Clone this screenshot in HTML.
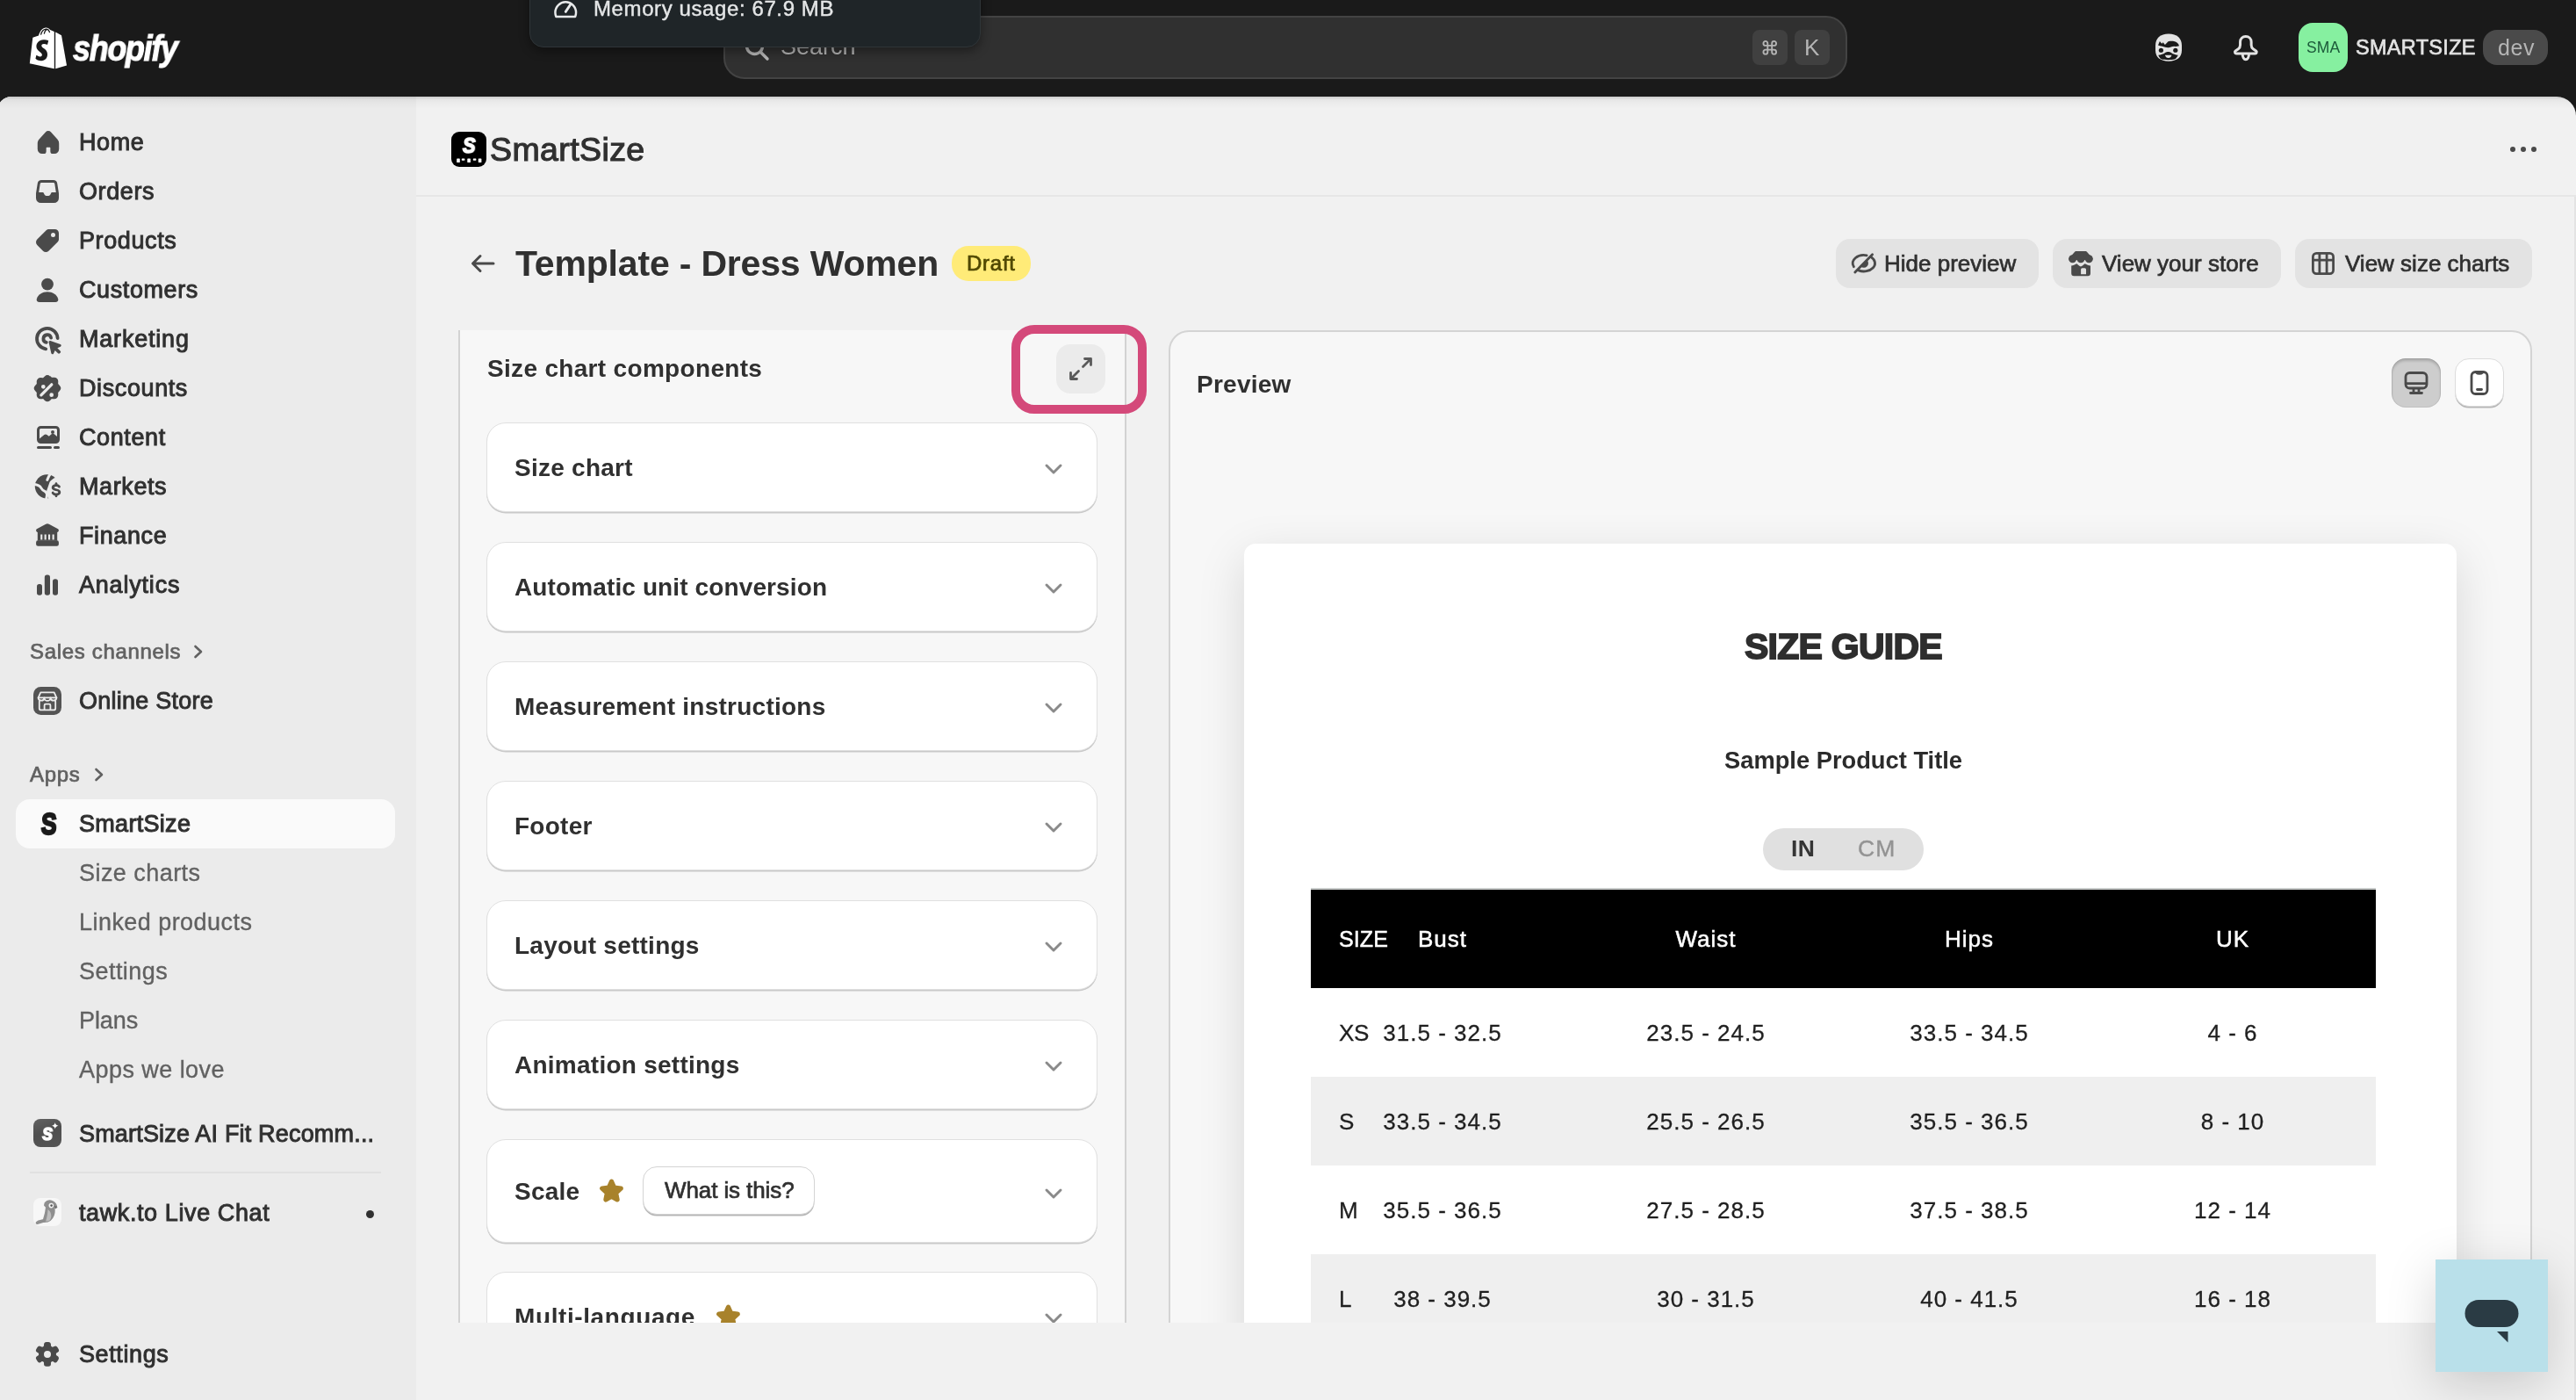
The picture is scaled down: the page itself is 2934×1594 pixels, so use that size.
<!DOCTYPE html>
<html>
<head>
<meta charset="utf-8">
<title>SmartSize</title>
<style>
*{box-sizing:border-box;margin:0;padding:0}
html,body{width:2934px;height:1594px;overflow:hidden;background:#1a1a1a}
body{position:relative;font-family:"Liberation Sans",sans-serif;color:#303030}
.a{position:absolute}
.x{position:absolute;white-space:nowrap;line-height:1;will-change:transform}
.m{-webkit-text-stroke:.7px currentColor}
.b{font-weight:bold}
svg{position:absolute;overflow:visible}
/* top bar */
#search{left:824px;top:18px;width:1280px;height:72px;border-radius:24px;background:#303030;border:2px solid #434343}
.kbd{top:34px;width:40px;height:40px;border-radius:8px;background:#404040;color:#b5b5b5;text-align:center}
#mem{left:603px;top:-20px;width:514px;height:73.500px;border-radius:16px;background:#1f2528;border:1px solid #2f3538;box-shadow:0 4px 12px rgba(0,0,0,.4)}
/* frame */
#frame{left:-3px;top:110px;width:2937px;height:1500px;background:#f1f1f1;border-radius:16px 22px 0 0;overflow:hidden}
#side{left:0;top:0;width:477px;height:1500px;background:#ebebeb}
#topshade{left:0;top:0;width:2937px;height:14px;background:linear-gradient(rgba(0,0,0,.14) 0,rgba(0,0,0,.12) 1.500px,rgba(0,0,0,.05) 3px,rgba(0,0,0,.025) 7px,rgba(0,0,0,0) 14px)}
.nav{left:90px;font-size:27px;letter-spacing:.6px;color:#303030}
.nav.m{-webkit-text-stroke:.95px currentColor}
.sub{left:90px;font-size:27px;letter-spacing:.45px;color:#616161;-webkit-text-stroke:.35px #616161}
.sec{left:34px;font-size:24px;letter-spacing:.68px;color:#616161}
.ic{left:34px;width:40px;height:40px;fill:#4a4a4a}
/* page */
.btn{top:272px;height:56px;border-radius:16px;background:#e3e3e3}
.btn .x{font-size:26px;letter-spacing:0;top:15px;color:#303030}
.card{left:554px;width:696px;height:102px;border-radius:22px;background:#fff;border:1.5px solid #e0e0e0;box-shadow:0 2px 0 -.5px #c9c9c9,0 1px 0 0 #d4d4d4}
.card .x{left:31px;top:36px;font-size:28px;font-weight:bold;letter-spacing:.25px}
.c{width:300px;text-align:center}
.chev{left:634px;top:40px;width:22px;height:22px;fill:none;stroke:#8a8a8a;stroke-width:3;stroke-linecap:round;stroke-linejoin:round}
</style>
</head>
<body>

<!-- ================= TOP BAR ================= -->
<div class="a" id="search"></div>
<svg class="a" style="left:846px;top:39px;width:32px;height:32px" viewBox="0 0 32 32" fill="none" stroke="#b5b5b5" stroke-width="3.4" stroke-linecap="round"><circle cx="13.5" cy="13.5" r="9"/><path d="M20.5 20.5L28 28"/></svg>
<div class="x" style="left:888.500px;top:40px;font-size:27px;letter-spacing:0;color:#b5b5b5">Search</div>
<div class="a kbd" style="left:1996px"><svg class="a" style="left:10.300px;top:9.500px;width:19.500px;height:20.500px" viewBox="0 0 24 24" fill="none" stroke="#b5b5b5" stroke-width="2.300" stroke-linejoin="round"><path d="M18 3a3 3 0 0 0-3 3v12a3 3 0 0 0 3 3 3 3 0 0 0 3-3 3 3 0 0 0-3-3H6a3 3 0 0 0-3 3 3 3 0 0 0 3 3 3 3 0 0 0 3-3V6a3 3 0 0 0-3-3 3 3 0 0 0-3 3 3 3 0 0 0 3 3h12a3 3 0 0 0 3-3 3 3 0 0 0-3-3z"/></svg></div>
<div class="a kbd" style="left:2044px"><div class="x" style="left:11px;top:7px;font-size:26px">K</div></div>

<!-- memory tooltip -->
<div class="a" id="mem"></div>
<svg class="a" style="left:631px;top:-6.500px;width:26.500px;height:26.500px" viewBox="0 0 28 28" fill="none" stroke="#e8eaeb" stroke-width="2.6" stroke-linecap="round" stroke-linejoin="round"><path d="M2.5 26.5h23c.7-1.8 1-3.4 1-5.2C26.500 14.300 20.900 8.800 14 8.800S1.500 14.300 1.500 21.300c0 1.800.3 3.400 1 5.200Z"/><path d="M14 20.500L20 11.500" stroke-width="3"/></svg>
<div class="x" style="left:676px;top:-2px;font-size:24px;letter-spacing:.6px;color:#e4e6e7;-webkit-text-stroke:.4px #e4e6e7">Memory usage: 67.9 MB</div>

<!-- logo -->
<svg class="a" style="left:33px;top:29.500px;width:45px;height:49.500px" viewBox="0 0 45 52" preserveAspectRatio="none">
<path fill="#fff" d="M4.300 13.300L11 11.100C12.100 6.300 14.800 2.200 18.800 1.500c2.200-.3 4 .7 5.300 2.600l4.700 2.100V50.800L.8 44.300Z"/>
<path fill="#fff" d="M30.200 6.800l6.800 4L43 46.800 30.200 50.800Z"/>
<path fill="none" stroke="#1a1a1a" stroke-width="1.300" d="M13.500 10.200C14.300 6.600 16.600 3.600 19.300 3.300c2.100-.2 3.600 1.600 4.300 4.200M17.300 9C17.800 6.300 19.200 4 21 3.600"/>
<path fill="#1a1a1a" transform="translate(15.100 16.100) scale(1.130 1.190) translate(-15.500 -15.300)" d="M21.800 16.200c-1.500-.7-3.300-1-5-.9-4.500.3-7.400 3.300-7.200 7 .3 4.400 5.600 5.300 5.700 8 .1 1-.6 1.800-1.700 1.900-1.800.1-4-1.500-4-1.500l-.9 3.600s2.200 2.300 6 2.100c3.800-.2 6.300-3.100 6-7.100-.3-4.800-5.800-5.800-5.900-7.900-.1-1.300 1-1.900 2.300-2 1.700-.1 3.600.8 3.600.8Z"/>
</svg>
<div class="x b" style="left:82.800px;top:35px;font-size:40px;font-style:italic;color:#fff;letter-spacing:-1.5px;transform:scaleX(.9);transform-origin:0 0;-webkit-text-stroke:1.100px #fff">shopify</div>

<!-- right icons -->
<svg class="a" style="left:2454px;top:37.800px;width:32px;height:32.200px" viewBox="0 0 32 32.500" preserveAspectRatio="none">
<path fill="#e3e3e3" d="M16 .5C6.500.5 1 5.500 1 14v5.500C1 27.500 6.500 32 16 32s15-4.500 15-12.500V14C31 5.500 25.500.5 16 .5Z"/>
<path fill="#1a1a1a" d="M4 13.700L5.900 9.100l2.350 2.650 1.350-1.350 2.300 2.700L15.500 9.400C18 8.800 20 8.800 22.100 9.100c1.700.400 3 1.100 4 2 1 1 1.600 2 1.900 3.300-2 .600-4 .800-5.900.600-2.500.300-4.500 1.400-6.600 1.400s-4.500-.700-6.600-1.400c-1.900-.300-3.500-.700-4.900-1.300Z"/>
<circle cx="7.400" cy="19.400" r="2.600" fill="#1a1a1a"/><circle cx="23.800" cy="19.400" r="2.600" fill="#1a1a1a"/>
<path fill="#1a1a1a" d="M4.300 25c3-.300 5.500-1.200 7.500-2.500 1.500-1 2.700-1.200 3.700-1.200s2.200.200 3.700 1.200c2 1.300 4.500 2.200 7.500 2.500-.800 2-2 3.500-3.300 4.600-2.300.700-5 .900-7.900.900s-5.600-.200-7.900-.900C6 28.500 5 27 4.300 25Z"/>
<path fill="#e3e3e3" d="M11.900 24.900h7.600c-.400 2-2 3.300-3.800 3.300s-3.400-1.300-3.800-3.300Z"/>
</svg>
<svg class="a" style="left:2543.200px;top:38.800px;width:30px;height:33px" viewBox="0 0 30 33" fill="none" stroke="#e3e3e3" stroke-width="3" stroke-linecap="round" stroke-linejoin="round">
<path d="M14.850 2.500c-3.700 0-6.300 2.700-6.300 6.200v3.600c0 2.200-.700 3.400-2.200 4.500l-3.200 2.200c-1.300 1-.600 3 1.100 3h21.200c1.700 0 2.400-2 1.100-3l-3.200-2.200c-1.500-1.100-2.200-2.300-2.200-4.500V8.700c0-3.500-2.600-6.200-6.300-6.200Z"/>
<path d="M11.200 22.500a3.650 6.300 0 0 0 7.300 0"/></svg>
<div class="a" style="left:2618px;top:26px;width:56px;height:56px;border-radius:16px;background:#86f0a0"></div>
<div class="x" style="left:2627px;top:46px;font-size:17.500px;color:#1c5a3a;letter-spacing:.1px">SMA</div>
<div class="x m" style="left:2682.500px;top:43px;font-size:23.500px;letter-spacing:.3px;color:#e3e3e3">SMARTSIZE</div>
<div class="a" style="left:2828px;top:34px;width:74px;height:40px;border-radius:16px;background:#4a4a4a"></div>
<div class="x" style="left:2844.500px;top:41.500px;font-size:25px;letter-spacing:.6px;color:#b5b5b5">dev</div>

<!-- ================= FRAME ================= -->
<div class="a" id="frame">
<div class="a" id="side"></div>
<div class="a" id="topshade"></div>
</div>

<!-- ================= SIDEBAR ================= -->
<!-- Home -->
<svg class="ic" style="top:142px;left:34.500px" viewBox="0 0 20 20"><path transform="translate(10 10) scale(.94 .96) translate(-10 -9.700)" d="M8.344 3.692a2.250 2.250 0 0 1 3.312 0l3.854 4.190a3.750 3.750 0 0 1 .990 2.538v3.330a2.750 2.750 0 0 1-2.750 2.750h-1a1.500 1.500 0 0 1-1.500-1.500v-2a.250.250 0 0 0-.250-.250h-2a.250.250 0 0 0-.250.250v2a1.500 1.500 0 0 1-1.500 1.500h-1a2.750 2.750 0 0 1-2.750-2.750v-3.330c0-.940.353-1.847.990-2.539l3.854-4.189Z"/></svg>
<div class="x nav m" style="top:149px">Home</div>
<!-- Orders -->
<svg class="ic" style="top:198px" viewBox="0 0 20 20"><path fill-rule="evenodd" d="M6.600 3.500h6.800a2.250 2.250 0 0 1 2.200 1.850l.850 5.400c.030.200.050.400.050.600v2.400a2.750 2.750 0 0 1-2.750 2.750h-7.500A2.750 2.750 0 0 1 3.500 13.750v-2.400c0-.200.020-.400.050-.600l.850-5.400A2.250 2.250 0 0 1 6.600 3.500ZM6.600 5a.750.750 0 0 0-.740.630L5.100 10.500h2.100c.400 0 .700.250.800.600a2.100 2.100 0 0 0 4 0c.100-.350.400-.600.800-.600h2.100l-.760-4.870A.750.750 0 0 0 13.400 5H6.600Z"/></svg>
<div class="x nav m" style="top:205px">Orders</div>
<!-- Products -->
<svg class="ic" style="top:254px" viewBox="0 0 20 20"><path fill-rule="evenodd" d="M10.900 3.500h3.350a2.250 2.250 0 0 1 2.250 2.250V9.100c0 .600-.240 1.170-.660 1.590l-5.150 5.150a2.250 2.250 0 0 1-3.180 0l-3.350-3.350a2.250 2.250 0 0 1 0-3.180l5.150-5.150c.420-.420 1-.660 1.590-.660Zm2.350 4.500a1.250 1.250 0 1 0 0-2.500 1.250 1.250 0 0 0 0 2.500Z"/></svg>
<div class="x nav m" style="top:261px">Products</div>
<!-- Customers -->
<svg class="ic" style="top:311px" viewBox="0 0 20 20"><circle cx="10" cy="6.300" r="3.450"/><path d="M3.900 14.700c.750-2.600 3.200-4.100 6.100-4.100s5.350 1.500 6.100 4.100c.300 1.050-.500 1.800-1.500 1.800H5.400c-1 0-1.800-.750-1.500-1.800Z"/></svg>
<div class="x nav m" style="top:317px">Customers</div>
<!-- Marketing -->
<svg class="ic" style="top:366px;left:33px" viewBox="0 0 20 20"><path fill="none" stroke="#4a4a4a" stroke-width="1.900" stroke-linecap="round" d="M16.300 9.500A5.900 5.900 0 1 0 9.600 15.650M12.550 9.300A2.200 2.200 0 1 0 9.900 11.950"/><path d="M11.300 11.900c-.180-.540.340-1.060.880-.880l5.700 1.950c.620.220.650 1.080.050 1.350l-1.750.800 1.700 1.700c.270.270.270.720 0 .990l-.360.360c-.270.270-.720.270-.990 0l-1.700-1.700-.800 1.750c-.270.600-1.130.570-1.350-.050Z"/></svg>
<div class="x nav m" style="top:373px;letter-spacing:.8px">Marketing</div>
<!-- Discounts -->
<svg class="ic" style="top:422px;left:33px" viewBox="0 0 20 20"><path fill-rule="evenodd" d="M11.300 2.900a1.900 1.900 0 0 0-2.600 0l-.700.650a.400.400 0 0 1-.300.100l-.950-.050A1.900 1.900 0 0 0 4.750 5.450l.050.950a.400.400 0 0 1-.100.300l-.650.700a1.900 1.900 0 0 0 0 2.600l.650.700c.070.080.110.190.100.300l-.050.950a1.900 1.900 0 0 0 2 2l.950-.050c.110-.010.220.030.300.100l.700.650a1.900 1.900 0 0 0 2.600 0l.700-.650a.400.400 0 0 1 .300-.100l.950.050a1.900 1.900 0 0 0 2-2l-.050-.950a.400.400 0 0 1 .100-.300l.650-.700a1.900 1.900 0 0 0 0-2.600l-.650-.700a.400.400 0 0 1-.100-.300l.050-.950a1.900 1.900 0 0 0-2-2l-.950.050a.400.400 0 0 1-.300-.100l-.700-.650ZM8 9a1 1 0 1 0 0-2 1 1 0 0 0 0 2Zm4.550-1.550a.700.700 0 0 0-1-1l-5.100 5.100a.700.700 0 0 0 1 1l5.100-5.100ZM12 13a1 1 0 1 0 0-2 1 1 0 0 0 0 2Z" transform="translate(10.500 11.500) scale(1.170) translate(-10 -10)"/></svg>
<div class="x nav m" style="top:429px">Discounts</div>
<!-- Content -->
<svg class="ic" style="top:478px;left:35px" viewBox="0 0 20 20"><path fill-rule="evenodd" d="M5.750 3.500A2.250 2.250 0 0 0 3.500 5.750v5.500a2.250 2.250 0 0 0 2.250 2.250h8.500a2.250 2.250 0 0 0 2.250-2.250v-5.500A2.250 2.250 0 0 0 14.250 3.500h-8.500ZM5 5.750C5 5.340 5.340 5 5.750 5h8.500c.410 0 .750.340.750.750v3.700l-1.600-1.300a1.250 1.250 0 0 0-1.600 0l-1.400 1.200-1.200-.850a1.250 1.250 0 0 0-1.500.050L5 10.750v-5ZM12.500 6a1 1 0 1 1 0 2 1 1 0 0 1 0-2Z"/><path d="M4.250 15h7a.750.750 0 0 1 0 1.500h-7a.750.750 0 0 1 0-1.500ZM13.750 15h2a.750.750 0 0 1 0 1.500h-2a.750.750 0 0 1 0-1.500Z"/></svg>
<div class="x nav m" style="top:485px">Content</div>
<!-- Markets -->
<svg class="ic" style="top:534px;left:33px" viewBox="0 0 20 20"><circle cx="10.200" cy="9.900" r="6.800"/><path fill="none" stroke="#ebebeb" stroke-width="1.500" stroke-linecap="round" d="M12.300 2.600c-.900 1.300-1.500 2.500-1.900 3.600M3.300 8.800c1.800.300 3 .900 3.600 2 .600 1.100 1.400 1.600 2.300 2 .900.500 1.200 1.400 1 2.500l-.300 1.500"/><path fill="#ebebeb" d="M11.800 7.400c1.500-2 4-3.300 6.500-2.800l1.700 6.400v9h-9.300c.800-1.500.800-3.100 0-4.300-.900-1.400-.900-3.100-.200-4.600Z"/><path d="M15.500 7.600c.400 0 .700.300.700.700v.300c.800.150 1.400.600 1.700 1.250a.700.700 0 0 1-1.250.600c-.150-.300-.550-.500-1.150-.500-.750 0-1.100.300-1.100.600 0 .250.150.450 1.250.650 1.200.200 2.450.650 2.450 2 0 1-.800 1.700-1.900 1.900v.300a.700.700 0 0 1-1.400 0v-.300c-.900-.150-1.600-.650-1.900-1.400a.700.700 0 0 1 1.300-.500c.150.350.600.600 1.300.600.800 0 1.100-.300 1.100-.600 0-.300-.200-.500-1.300-.700-1.150-.200-2.400-.600-2.400-1.950 0-1 .800-1.700 1.900-1.900V8.300c0-.400.300-.700.700-.700Z"/></svg>
<div class="x nav m" style="top:541px">Markets</div>
<!-- Finance -->
<svg class="ic" style="top:590px" viewBox="0 0 20 20"><path d="M9.100 3.400a1.900 1.900 0 0 1 1.800 0l4.900 2.600c.400.200.650.600.650 1.050 0 .500-.400.900-.900.900H4.450c-.500 0-.900-.400-.900-.900 0-.450.250-.850.650-1.050Z"/><rect x="4.400" y="7.800" width="11.200" height="5"/><rect x="3.550" y="12.600" width="12.900" height="3.250" rx="1.100"/><path fill="#ebebeb" d="M6.100 9.200h1.050v3H6.100zM8.300 9.200h1.050v3H8.300zM10.500 9.200h1.050v3H10.500zM12.800 9.200h1.050v3H12.800z"/></svg>
<div class="x nav m" style="top:597px">Finance</div>
<!-- Analytics -->
<svg class="ic" style="top:646px" viewBox="0 0 20 20"><rect x="4" y="9.450" width="3" height="6.450" rx="1.400"/><rect x="8.400" y="4.300" width="3.100" height="11.600" rx="1.400"/><rect x="13" y="6.600" width="3" height="9.300" rx="1.400"/></svg>
<div class="x nav m" style="top:653px;letter-spacing:.8px">Analytics</div>

<div class="x sec m" style="top:730px">Sales channels</div>
<svg class="a" style="left:220px;top:733px;width:12px;height:18px" viewBox="0 0 12 18" fill="none" stroke="#616161" stroke-width="2.600" stroke-linecap="round" stroke-linejoin="round"><path d="M2.500 3l6.500 6-6.500 6"/></svg>
<!-- Online store -->
<svg class="a" style="left:38px;top:782px;width:32px;height:32px" viewBox="0 0 32 32"><rect width="32" height="32" rx="8.500" fill="#545454"/><g fill="none" stroke="#ededed" stroke-width="1.800" stroke-linejoin="round" stroke-linecap="round"><path d="M8.300 6.300h15.400l2.700 6.100H5.600Z"/><path d="M5.600 12.400a3.470 3.470 0 0 0 6.930 0a3.470 3.470 0 0 0 6.940 0a3.470 3.470 0 0 0 6.930 0"/><path d="M6.800 16.500v7.900a2 2 0 0 0 2 2h14.400a2 2 0 0 0 2-2v-7.900"/><path d="M12.600 26.200v-5.200a1.300 1.300 0 0 1 1.300-1.300h4.200a1.300 1.300 0 0 1 1.300 1.300v5.200"/></g></svg>
<div class="x nav m" style="top:785px;letter-spacing:.25px">Online Store</div>

<div class="x sec m" style="top:870px">Apps</div>
<svg class="a" style="left:107px;top:873px;width:12px;height:18px" viewBox="0 0 12 18" fill="none" stroke="#616161" stroke-width="2.600" stroke-linecap="round" stroke-linejoin="round"><path d="M2.500 3l6.500 6-6.500 6"/></svg>
<!-- SmartSize selected -->
<div class="a" style="left:18px;top:910px;width:432px;height:56px;border-radius:16px;background:#fafafa"></div>
<div class="x b" style="left:46.500px;top:920px;font-size:35px;color:#1a1a1a;-webkit-text-stroke:2.400px #1a1a1a;transform:scaleX(.76) skewX(-4deg);transform-origin:0 50%">S</div>
<div class="x nav" style="top:925px;letter-spacing:.3px;-webkit-text-stroke:1.050px #303030">SmartSize</div>
<div class="x sub" style="top:981px">Size charts</div>
<div class="x sub" style="top:1037px">Linked products</div>
<div class="x sub" style="top:1093px">Settings</div>
<div class="x sub" style="top:1149px;letter-spacing:-.1px">Plans</div>
<div class="x sub" style="top:1205px">Apps we love</div>
<!-- SmartSize AI -->
<div class="a" style="left:38px;top:1274px;width:32px;height:32px;border-radius:8px;background:linear-gradient(160deg,#626262,#4f4f4f 45%,#555)"></div>
<div class="x b" style="left:47.500px;top:1277px;font-size:25px;color:#fff;font-style:italic;-webkit-text-stroke:1.300px #fff;transform:scaleX(.9);transform-origin:0 50%">s</div>
<svg class="a" style="left:59px;top:1277.500px;width:7.500px;height:7.500px" viewBox="0 0 10 10"><path fill="#fff" d="M5 0c.5 3 2 4.500 5 5-3 .5-4.500 2-5 5-.5-3-2-4.500-5-5 3-.5 4.500-2 5-5Z"/></svg>
<div class="x nav m" style="top:1278px;letter-spacing:.18px">SmartSize AI Fit Recomm...</div>
<div class="a" style="left:34px;top:1334px;width:400px;height:2px;background:#e0e0e0"></div>
<!-- tawk -->
<div class="a" style="left:38px;top:1364px;width:32px;height:32px;border-radius:8px;background:#f7f7f7"></div>
<svg class="a" style="left:38px;top:1364px;width:32px;height:32px" viewBox="0 0 32 32"><path fill="#8f8f8f" stroke="#8f8f8f" stroke-width="1.600" stroke-linejoin="round" d="M13.500 5.500c2-2.300 5.500-2.700 8.300-1.500 2.700 1.200 4.500 3.800 4.700 6.800l-3.300-.300c1.300 4.200.600 8.500-1.700 12.200-1.200 1.900-3 3.400-5.200 4l-4.300.400-7.500 2.100c-.900.200-1.400-.900-.700-1.500l2.100-1.500 5.700-1.300c1.600-4.700 2.800-9.500 3.200-14.400l-2-2.200.7-2.800Z"/><path fill="#bdbdbd" d="M16.500 13c2.500 1.500 4 4.500 3.800 8-.1 2.200-1 4-2.500 5.300l-3.700.2c1.300-4.300 2.200-8.800 2.400-13.500Z"/><circle cx="20.300" cy="8.600" r="2.800" fill="#f3f3f3"/><circle cx="20.600" cy="8.600" r="1.300" fill="#5a5a5a"/><path fill="#6e6e6e" d="M24 8.800l3.400 1.300-2.600 2.700Z"/></svg>
<div class="x nav m" style="top:1368px">tawk.to Live Chat</div>
<div class="a" style="left:417px;top:1378px;width:9px;height:9px;border-radius:50%;background:#303030"></div>
<!-- Settings -->
<svg class="ic" style="top:1522px;left:34px" viewBox="0 0 20 20"><path fill-rule="evenodd" d="M8.013 4.389c0-.767.621-1.389 1.389-1.389h1.196c.767 0 1.390.622 1.390 1.389v.660c0 .153.101.330.307.436.141.074.278.155.411.241.196.128.402.130.536.052l.576-.332a1.389 1.389 0 0 1 1.897.508l.599 1.037a1.390 1.390 0 0 1-.509 1.897l-.621.359c-.131.075-.232.249-.225.477a5.135 5.135 0 0 1-.004.427c-.012.233.090.412.223.489l.627.362c.665.384.893 1.233.509 1.897l-.599 1.037a1.390 1.390 0 0 1-1.897.508l-.672-.388c-.132-.076-.332-.076-.526.045a4.928 4.928 0 0 1-.325.185c-.206.108-.308.284-.308.437v.778a1.390 1.390 0 0 1-1.389 1.389h-1.196a1.389 1.389 0 0 1-1.389-1.389v-.778c0-.153-.102-.330-.308-.437a4.960 4.960 0 0 1-.325-.185c-.194-.121-.395-.120-.526-.045l-.672.388a1.390 1.390 0 0 1-1.898-.508l-.598-1.037a1.389 1.389 0 0 1 .509-1.897l.627-.362c.133-.077.235-.256.223-.489a5.030 5.030 0 0 1-.004-.427c.007-.228-.094-.402-.225-.477l-.621-.359a1.389 1.389 0 0 1-.509-1.897l.598-1.037a1.390 1.390 0 0 1 1.898-.508l.576.332c.133.078.340.076.535-.052a4.810 4.810 0 0 1 .412-.241c.205-.106.307-.283.307-.436v-.660Zm1.987 7.611a2 2 0 1 0 0-4 2 2 0 0 0 0 4Z"/></svg>
<div class="x nav m" style="top:1529px">Settings</div>

<!-- ================= MAIN ================= -->
<!-- app bar -->
<div class="a" style="left:474px;top:222px;width:2460px;height:2px;background:#e6e6e6"></div>
<div class="a" style="left:514px;top:150px;width:40px;height:40px;border-radius:9px;background:#000"></div>
<div class="x b" style="left:526.500px;top:155px;font-size:23px;color:#fff;font-style:italic;-webkit-text-stroke:1.600px #fff;transform:scaleX(.95);transform-origin:0 50%">S</div>
<svg class="a" style="left:514px;top:150px;width:40px;height:40px" viewBox="0 0 40 40" fill="#fff"><rect x="6.200" y="30.500" width="3.600" height="4.500" rx=".6"/><rect x="18.300" y="30.500" width="3.600" height="4.500" rx=".6"/><rect x="30.800" y="30.500" width="3.600" height="4.500" rx=".6"/><rect x="11.800" y="30.600" width="3.600" height="2.100" rx=".6"/><rect x="24.800" y="30.600" width="3.600" height="2.100" rx=".6"/></svg>
<div class="x" style="left:558.300px;top:152px;font-size:37.500px;letter-spacing:.4px;color:#303030;-webkit-text-stroke:1.150px #303030">SmartSize</div>
<div class="a" style="left:2859px;top:167px;width:6px;height:6px;border-radius:50%;background:#4a4a4a;box-shadow:12px 0 0 #4a4a4a,24px 0 0 #4a4a4a"></div>

<div class="a" style="left:2932px;top:224px;width:2px;height:1370px;background:#e3e3e3"></div>
<!-- page title -->
<svg class="a" style="left:536px;top:287px;width:28px;height:26px" viewBox="0 0 28 26" fill="none" stroke="#4a4a4a" stroke-width="3" stroke-linecap="round" stroke-linejoin="round"><path d="M26 13H3M11 4.500L2.500 13l8.500 8.500"/></svg>
<div class="x b" style="left:587px;top:279.500px;font-size:41px;letter-spacing:-.18px;color:#303030">Template - Dress Women</div>
<div class="a" style="left:1084px;top:280px;width:90px;height:40px;border-radius:19px;background:#ffeb78"></div>
<div class="x m" style="left:1100.500px;top:287.500px;font-size:24px;letter-spacing:.75px;color:#4f4700">Draft</div>

<!-- buttons -->
<div class="a btn" style="left:2091px;width:231px">
<svg class="a" style="left:17px;top:15px;width:30px;height:26px" viewBox="0 0 30 26" fill="none" stroke="#4a4a4a" stroke-width="2.800" stroke-linecap="round"><path d="M18.170 3.820A12.650 9.250 0 0 0 3.440 16.660M23.360 5.880A12.650 9.250 0 0 1 8.960 20.920M4.800 22.900L24.600 2.750"/><path fill="#4a4a4a" stroke="none" d="M11.260 16.460A5.200 5.200 0 0 0 18.540 9.040Z"/></svg>
<div class="x m" style="left:55px">Hide preview</div></div>
<div class="a btn" style="left:2338px;width:260px">
<svg class="a" style="left:18px;top:14px;width:28px;height:28px" viewBox="0 0 28 28" fill="#4a4a4a"><path stroke="#4a4a4a" stroke-width="2.400" stroke-linejoin="round" d="M8.200 1.200h11.600l6.600 7.500H1.600Z"/><circle cx="4.600" cy="8.700" r="4.500"/><circle cx="13.950" cy="8.700" r="4.500"/><circle cx="23.300" cy="8.700" r="4.500"/><path fill-rule="evenodd" d="M3.200 16.400c2 0 4-.900 6.100-2.100 1.700 1.200 3.200 3.200 4.650 3.200s3-2 4.650-3.200c2.200 1.200 4.200 2.100 6.400 2.100v8.800a3 3 0 0 1-3 3H6.200a3 3 0 0 1-3-3ZM14.100 20.800a1.500 1.500 0 0 1 1.500-1.500h2.900a1.500 1.500 0 0 1 1.500 1.500v5.450h-5.900Z"/></svg>
<div class="x m" style="left:56px">View your store</div></div>
<div class="a btn" style="left:2614px;width:270px">
<svg class="a" style="left:19px;top:15px;width:26px;height:26px" viewBox="0 0 26 26" fill="none" stroke="#4a4a4a" stroke-width="2.800" stroke-linejoin="round"><rect x="1.400" y="1.400" width="23.200" height="23.200" rx="4"/><path d="M1.400 9.200h23.200M8.900 1.400v23.200M17.100 1.400v23.200"/></svg>
<div class="x m" style="left:57px">View size charts</div></div>

<!-- LEFT PANEL -->
<div class="a" id="lp" style="left:522px;top:376px;width:761px;height:1130px;background:#f7f7f7;border-left:2px solid #d2d2d2;border-right:2px solid #d2d2d2;overflow:hidden"></div>
<div class="x b" style="left:555px;top:406px;font-size:28px;letter-spacing:.32px;color:#303030">Size chart components</div>
<div class="a" style="left:1203px;top:392px;width:56px;height:56px;border-radius:16px;background:#ebebeb"></div>
<svg class="a" style="left:1216px;top:405px;width:30px;height:30px" viewBox="0 0 30 30" fill="none" stroke="#5a5a5a" stroke-width="2.800" stroke-linecap="round" stroke-linejoin="round"><path d="M19.500 3.500h7V10.500M26 4L17.500 12.500M10.500 26.500h-7V19.500M4 26l8.500-8.500"/></svg>
<div class="a" style="left:1152px;top:370px;width:154px;height:101px;border:10px solid #d4497a;border-radius:26px"></div>
<div class="a" style="left:0;top:0;width:2934px;height:1506px;overflow:hidden;clip-path:inset(376px 0 0 0)">
<div class="a card" style="top:481px;height:102px"><div class="x" style="top:37px">Size chart</div><svg class="chev" style="top:41px" viewBox="0 0 22 22"><path d="M3 7l8 8 8-8"/></svg></div>
<div class="a card" style="top:617px;height:102px"><div class="x" style="top:37px;letter-spacing:.12px">Automatic unit conversion</div><svg class="chev" style="top:41px" viewBox="0 0 22 22"><path d="M3 7l8 8 8-8"/></svg></div>
<div class="a card" style="top:753px;height:102px"><div class="x" style="top:37px">Measurement instructions</div><svg class="chev" style="top:41px" viewBox="0 0 22 22"><path d="M3 7l8 8 8-8"/></svg></div>
<div class="a card" style="top:889px;height:102px"><div class="x" style="top:37px">Footer</div><svg class="chev" style="top:41px" viewBox="0 0 22 22"><path d="M3 7l8 8 8-8"/></svg></div>
<div class="a card" style="top:1025px;height:102px"><div class="x" style="top:37px">Layout settings</div><svg class="chev" style="top:41px" viewBox="0 0 22 22"><path d="M3 7l8 8 8-8"/></svg></div>
<div class="a card" style="top:1161px;height:102px"><div class="x" style="top:37px">Animation settings</div><svg class="chev" style="top:41px" viewBox="0 0 22 22"><path d="M3 7l8 8 8-8"/></svg></div>
<div class="a card" style="top:1297px;height:118px"><div class="x" style="top:44.500px">Scale</div><svg class="a" style="left:126px;top:43px;width:31px;height:30px" viewBox="0 0 29 28"><path fill="#a8822b" stroke="#a8822b" stroke-width="5" stroke-linejoin="round" d="M14.500 3.900l2.900 6.600 7.100.800-5.300 4.900 1.400 7-6.100-3.500-6.100 3.500 1.400-7-5.300-4.900 7.100-.800Z"/></svg><div class="a" style="left:177px;top:30px;width:196px;height:55px;border-radius:16px;background:#fff;border:1.500px solid #d4d4d4;box-shadow:0 2px 0 -.5px #b5b5b5"></div><div class="x m" style="left:202px;top:44px;font-size:26px;font-weight:normal;letter-spacing:-.1px">What is this?</div><svg class="chev" style="top:50px" viewBox="0 0 22 22"><path d="M3 7l8 8 8-8"/></svg></div>
<div class="a card" style="top:1448px;height:102px"><div class="x" style="top:36.500px;letter-spacing:.6px">Multi-language</div><svg class="a" style="left:258.500px;top:35px;width:31px;height:30px" viewBox="0 0 29 28"><path fill="#a8822b" stroke="#a8822b" stroke-width="5" stroke-linejoin="round" d="M14.500 3.900l2.900 6.600 7.100.800-5.300 4.900 1.400 7-6.100-3.500-6.100 3.500 1.400-7-5.300-4.900 7.100-.800Z"/></svg><svg class="chev" style="top:41px" viewBox="0 0 22 22"><path d="M3 7l8 8 8-8"/></svg></div>
</div>

<!-- PREVIEW CARD -->
<div class="a" style="left:1331px;top:376px;width:1553px;height:1130px;overflow:hidden">
<div class="a" style="left:0;top:0;width:1553px;height:1200px;border-radius:23px;background:#f7f7f7;border:2px solid #d4d4d4"></div>
<!-- modal -->
<div class="a" style="left:86px;top:243px;width:1381px;height:1000px;border-radius:13px;background:#fff;box-shadow:0 16px 54px rgba(0,0,0,.13)"></div>
</div>
<div class="x b" style="left:1363px;top:424px;font-size:28px;letter-spacing:.25px;color:#303030">Preview</div>
<div class="a" style="left:2724px;top:408px;width:56px;height:56px;border-radius:16px;background:#cdcdcd;box-shadow:inset 0 3px 3px rgba(0,0,0,.17),inset 0 0 0 1px rgba(0,0,0,.06)"></div>
<svg class="a" style="left:2737px;top:421px;width:30px;height:30px" viewBox="0 0 30 30" fill="none" stroke="#4a4a4a" stroke-width="2.800" stroke-linecap="round" stroke-linejoin="round"><rect x="3" y="3.500" width="24" height="17.500" rx="4.500"/><path d="M4 15.700h22M12 21.500v4M18 21.500v4M8.500 26.500h13"/></svg>
<div class="a" style="left:2796px;top:408px;width:56px;height:55px;border-radius:16px;background:#fff;border:1.500px solid #dcdcdc;box-shadow:0 2px 0 -.5px #b5b5b5"></div>
<svg class="a" style="left:2809px;top:420px;width:30px;height:32px" viewBox="0 0 30 32" fill="none" stroke="#4a4a4a" stroke-width="2.800" stroke-linecap="round" stroke-linejoin="round"><rect x="6" y="3.500" width="18" height="25" rx="4.500"/><path d="M12.500 23.500h5"/><path stroke-width="1.800" d="M11.500 4.800c.800.800 1.600 1 3.500 1s2.700-.200 3.500-1"/></svg>

<!-- modal content -->
<div class="x b" style="left:1986.500px;top:716px;font-size:41px;letter-spacing:-.75px;color:#2e2e2e;-webkit-text-stroke:1.800px #2e2e2e">SIZE GUIDE</div>
<div class="x b" style="left:1964px;top:852px;font-size:27.300px;color:#2b2b2b">Sample Product Title</div>
<div class="a" style="left:2008px;top:943px;width:183px;height:48px;border-radius:24px;background:#e0e0e0"></div>
<div class="x b" style="left:2040px;top:952.500px;font-size:26.500px;letter-spacing:.4px;color:#353535">IN</div>
<div class="x" style="left:2115.500px;top:952.500px;font-size:26.500px;letter-spacing:1px;color:#939393;-webkit-text-stroke:.4px #939393">CM</div>

<!-- table -->
<div class="a" style="left:1493px;top:1011px;width:1213px;height:495px;overflow:hidden;font-size:26px;letter-spacing:1px;color:#1f1f1f;-webkit-text-stroke:.3px #1f1f1f">
<div class="a" style="left:0;top:0;width:1213px;height:2px;background:#c9cccb"></div>
<div class="a" style="left:0;top:2px;width:1213px;height:112px;background:#000"></div>
<div class="a" style="left:0;top:215px;width:1213px;height:101px;background:#efefef"></div>
<div class="a" style="left:0;top:417px;width:1213px;height:101px;background:#efefef"></div>
<div class="x th" style="left:32px;top:45.500px;color:#fff;-webkit-text-stroke:.5px #fff;font-size:25px;letter-spacing:.1px">SIZE</div>
<div class="x c" style="left:0;top:45px;color:#fff;-webkit-text-stroke:.5px #fff">Bust</div><div class="x c" style="left:300px;top:45px;color:#fff;-webkit-text-stroke:.5px #fff">Waist</div><div class="x c" style="left:600px;top:45px;color:#fff;-webkit-text-stroke:.5px #fff">Hips</div><div class="x c" style="left:900px;top:45px;color:#fff;-webkit-text-stroke:.5px #fff">UK</div>
<div class="x" style="left:32px;top:152px;letter-spacing:-.3px">XS</div><div class="x c" style="left:0;top:152px">31.5 - 32.5</div><div class="x c" style="left:300px;top:152px">23.5 - 24.5</div><div class="x c" style="left:600px;top:152px">33.5 - 34.5</div><div class="x c" style="left:900px;top:152px">4 - 6</div>
<div class="x" style="left:32px;top:253px">S</div><div class="x c" style="left:0;top:253px">33.5 - 34.5</div><div class="x c" style="left:300px;top:253px">25.5 - 26.5</div><div class="x c" style="left:600px;top:253px">35.5 - 36.5</div><div class="x c" style="left:900px;top:253px">8 - 10</div>
<div class="x" style="left:32px;top:354px">M</div><div class="x c" style="left:0;top:354px">35.5 - 36.5</div><div class="x c" style="left:300px;top:354px">27.5 - 28.5</div><div class="x c" style="left:600px;top:354px">37.5 - 38.5</div><div class="x c" style="left:900px;top:354px">12 - 14</div>
<div class="x" style="left:32px;top:455px">L</div><div class="x c" style="left:0;top:455px">38 - 39.5</div><div class="x c" style="left:300px;top:455px">30 - 31.5</div><div class="x c" style="left:600px;top:455px">40 - 41.5</div><div class="x c" style="left:900px;top:455px">16 - 18</div>
</div>

<!-- chat widget -->
<div class="a" style="left:2774px;top:1434px;width:128px;height:128px;background:#b9e0ea;box-shadow:0 14px 56px rgba(0,0,0,.17)"></div>
<svg class="a" style="left:2806px;top:1478px;width:64px;height:52px" viewBox="0 0 64 52"><rect x="1.500" y="2" width="61" height="31" rx="15.500" fill="#2a3b44"/><path fill="#2a3b44" d="M38 38h12.500v12.500Z"/></svg>


</body>
</html>
